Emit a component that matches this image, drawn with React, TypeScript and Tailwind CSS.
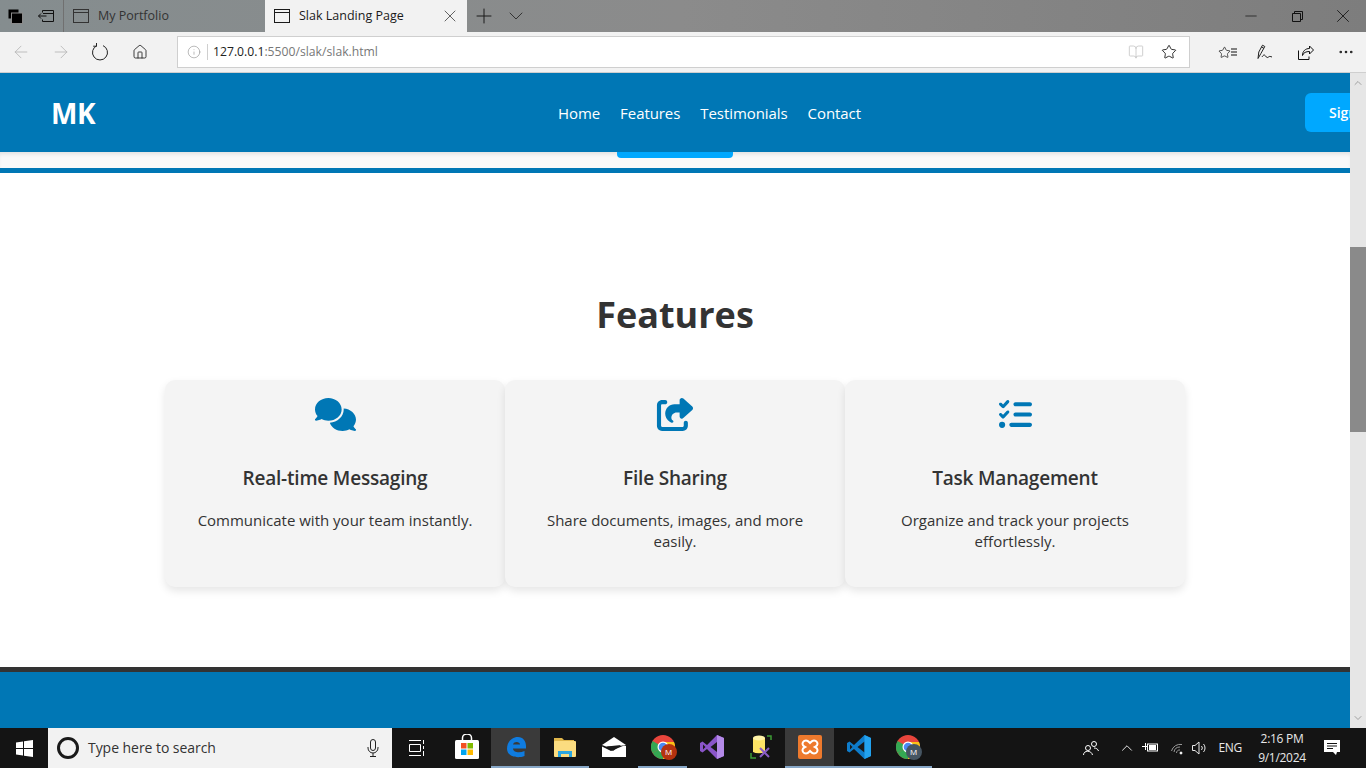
import React from 'react';
import {
  ArrowLeft,
  ArrowRight,
  BookOpen,
  ChevronDown,
  ChevronUp,
  Home,
  Info,
  Minus,
  MoreHorizontal,
  Plus,
  Star,
  X,
} from 'lucide-react';
import { FaComments, FaListCheck, FaShareFromSquare } from 'react-icons/fa6';

const TabIcon = () => (
  <svg width="16" height="14" viewBox="0 0 16 14" fill="none" stroke="currentColor" strokeWidth="1">
    <rect x="0.5" y="0.5" width="15" height="13" />
    <path d="M0.5 3.5h15" />
  </svg>
);

const WindowsLogo = () => (
  <svg width="17" height="17" viewBox="0 0 17 17" fill="#fff">
    <path d="M0 2.4 7 1.4V8H0zM8 1.3 17 0v8H8zM0 9h7v6.6L0 14.600zM8 9h9v8L8 15.700z" />
  </svg>
);

const StoreIcon = () => (
  <svg width="24" height="26" viewBox="0 0 24 26">
    <path d="M7.500 6V4a4.500 4 0 0 1 9 0v2" fill="none" stroke="#fff" strokeWidth="1.500" />
    <rect x="0" y="6" width="24" height="19" rx="1.500" fill="#fff" />
    <rect x="6" y="9" width="5.500" height="5.500" fill="#f25022" />
    <rect x="12.500" y="9" width="5.500" height="5.500" fill="#7fba00" />
    <rect x="6" y="15.500" width="5.500" height="5.500" fill="#00a4ef" />
    <rect x="12.500" y="15.500" width="5.500" height="5.500" fill="#ffb900" />
  </svg>
);

const EdgeIcon = () => (
  <svg width="22" height="22" viewBox="0 0 22 22" fill="none">
    <path
      d="M2 13C2 5 8 .8 13 1c5 .2 8 4 8 9v2.500H8c.3 4 6.500 5 11.500 2.500v5c-6 2.500-17 1.500-17.500-7z"
      fill="#0f7ce0"
    />
    <path d="M8 8.500h7c0-3-6-3.500-7 0z" fill="#3a3a3a" />
  </svg>
);

const FolderIcon = () => (
  <svg width="22" height="20" viewBox="0 0 22 20">
    <path d="M0 1h8l2 2h10v3H0z" fill="#e0b64b" />
    <rect x="0" y="4" width="22" height="16" rx="1" fill="#fbdc80" />
    <path d="M4 20v-6h14v6h-3v-3H7v3z" fill="#2aa6e0" />
  </svg>
);

const MailIcon = () => (
  <svg width="24" height="20" viewBox="0 0 24 20">
    <path d="M12 0 24 8 14 9.500 4 9.500 0 8z" fill="#fff" />
    <path d="M0 9.500 9 14 22 8.500 24 9v11H0z" fill="#fff" />
    <path d="M5 9.500 19 8 11 14z" fill="#1a1a1a" />
  </svg>
);

const ChromeIcon = ({ badge }: { badge: string }) => (
  <div className="relative w-6 h-6">
    <svg width="24" height="24" viewBox="0 0 24 24">
      <circle cx="12" cy="12" r="12" fill="#e8453c" />
      <path d="M12 12 1.600 18A12 12 0 0 0 12 24z" fill="#34a853" />
      <path d="M1.600 6A12 12 0 0 0 1.600 18L12 12z" fill="#34a853" />
      <path d="M12 12 12 24A12 12 0 0 0 23 7H12z" fill="#fbc116" />
      <circle cx="12" cy="12" r="5.500" fill="#fff" />
      <circle cx="12" cy="12" r="4.300" fill="#4a8af4" />
    </svg>
    <div
      className={`absolute left-[10px] top-[9px] w-4 h-4 rounded-full flex items-center justify-center text-[8px] text-white ${
        badge === 'red' ? 'bg-[#b5320f]' : 'bg-[#465562]'
      }`}
    >
      M
    </div>
  </div>
);

const VisualStudioIcon = () => (
  <svg width="24" height="24" viewBox="0 0 24 24">
    <path d="M17 0 24 3v18l-7 3-10-10-4.500 3.500L0 16V8l2.500-1.500L7 10z" fill="#8a55c9" />
    <path d="M17 7 10.500 12l6.500 5z" fill="#1a1a1a" />
    <path d="M3 9.500v5l2.500-2.500z" fill="#1a1a1a" />
    <path d="M17 0 24 3v18l-7 3z" fill="#b48ae8" />
  </svg>
);

const DbToolIcon = () => (
  <svg width="22" height="24" viewBox="0 0 22 24" fill="none">
    <path d="M3 3v14a7 2.500 0 0 0 12 0V3z" fill="#fde365" />
    <ellipse cx="9" cy="3" rx="6" ry="2.500" fill="#fff3a8" />
    <path d="M17 1h4v4M1 18v5h5M17 23" stroke="#3d9b35" strokeWidth="1.500" />
    <path d="M10 22l9-9M10 13l9 9" stroke="#8a5dc4" strokeWidth="2" />
  </svg>
);

const XamppIcon = () => (
  <svg width="24" height="24" viewBox="0 0 24 24" fill="none">
    <rect width="24" height="24" rx="2" fill="#ee7a2d" />
    <path
      d="M8 5.500c2 0 3 1.500 4 2.500 1-1 2-2.500 4-2.500 3 0 3.500 3 3.500 3.500 0 1.500-1.500 2.500-2.500 3 1 .5 2.500 1.500 2.500 3 0 .5-.5 3.500-3.500 3.500-2 0-3-1.500-4-2.500-1 1-2 2.500-4 2.500-3 0-3.500-3-3.500-3.500 0-1.500 1.500-2.500 2.500-3-1-.5-2.500-1.500-2.500-3 0-.5.500-3.500 3.500-3.500z"
      stroke="#fff"
      strokeWidth="2"
    />
  </svg>
);

const VSCodeIcon = () => (
  <svg width="24" height="24" viewBox="0 0 24 24">
    <path d="M17.500 0 24 3v18l-6.500 3L7 14l-4.500 3.500L0 16V8l2.500-1.500L7 10z" fill="#0e7ccb" />
    <path d="M17.500 6.500 10.500 12l7 5.500z" fill="#1a1a1a" />
    <path d="M3 9.500v5l2.500-2.500z" fill="#1a1a1a" />
    <path d="M17.500 0 24 3v18l-6.500 3z" fill="#22a2ef" />
  </svg>
);

const features = [
  { icon: FaComments, title: 'Real-time Messaging', text: 'Communicate with your team instantly.' },
  { icon: FaShareFromSquare, title: 'File Sharing', text: 'Share documents, images, and more easily.' },
  { icon: FaListCheck, title: 'Task Management', text: 'Organize and track your projects effortlessly.' },
];

const taskbarApps = [
  { el: <StoreIcon />, open: false, active: false },
  { el: <EdgeIcon />, open: true, active: true },
  { el: <FolderIcon />, open: true, active: false },
  { el: <MailIcon />, open: false, active: false },
  { el: <ChromeIcon badge="red" />, open: true, active: false },
  { el: <VisualStudioIcon />, open: false, active: false },
  { el: <DbToolIcon />, open: false, active: false },
  { el: <XamppIcon />, open: true, active: true },
  { el: <VSCodeIcon />, open: true, active: false },
  { el: <ChromeIcon badge="gray" />, open: true, active: false },
];

const App = () => {
  return (
    <div className="w-[1366px] h-[768px] overflow-hidden flex flex-col font-['Open_Sans','Noto_Sans',sans-serif]">
      {/* Tab strip */}
      <div className="h-8 shrink-0 flex items-stretch bg-gradient-to-r from-[#858d8f] via-[#8b8b8b] to-[#7d7d7d] text-[#1a1a1a]">
        <div className="w-16 flex items-center pl-2 gap-[15px] border-r border-[#707070]">
          <svg width="15" height="15" viewBox="0 0 15 15" fill="#000">
            <rect x="0.500" y="0.500" width="10" height="9" />
            <rect x="3.500" y="4" width="11" height="10.500" stroke="#8b8b8b" />
          </svg>
          <svg width="16" height="12" viewBox="0 0 16 12" fill="none" stroke="#111">
            <path d="M4.500 2.500V.5h11v11h-11v-2M.5 6h8M3 3.500.5 6 3 8.500M5 3.500h10" />
          </svg>
        </div>
        <div className="w-[201px] flex items-center pl-[9px] gap-2 text-[#333]">
          <TabIcon />
          <span className="text-[12.500px] ml-[1px]">My Portfolio</span>
        </div>
        <div className="w-[202px] flex items-center pl-[9px] bg-[#f2f2f2]">
          <TabIcon />
          <span className="text-[12.500px] ml-[9px] whitespace-nowrap">Slak Landing Page</span>
          <X className="w-[20px] h-[20px] ml-auto mr-[7px] text-[#444]" strokeWidth={1} />
        </div>
        <div className="flex items-center pl-[5px] gap-2">
          <Plus className="w-6 h-6" strokeWidth={1} />
          <ChevronDown className="w-6 h-6 text-[#333]" strokeWidth={1} />
        </div>
        <div className="ml-auto flex items-center">
          <div className="w-[46px] flex justify-center">
            <Minus className="w-[18px] h-[18px]" strokeWidth={1} />
          </div>
          <div className="w-[46px] flex justify-center">
            <svg width="11" height="11" viewBox="0 0 11 11" fill="none" stroke="#111">
              <path d="M.5 2.500h8v8h-8zM2.500 2.500v-2h8v8h-2" />
            </svg>
          </div>
          <div className="w-[46px] flex justify-center">
            <X className="w-[22px] h-[22px]" strokeWidth={1} />
          </div>
        </div>
      </div>

      {/* Address toolbar */}
      <div className="h-[41px] shrink-0 flex items-center bg-[#f2f2f2] border-b border-[#cfcfcf]">
        <div className="w-[177px] flex items-center pl-[11px] gap-[20px]">
          <ArrowLeft className="w-[20px] h-[20px] text-[#b4b4b4]" strokeWidth={1} />
          <ArrowRight className="w-[20px] h-[20px] text-[#b4b4b4]" strokeWidth={1} />
          <svg width="18" height="18" viewBox="0 0 18 18" fill="none" stroke="#222" strokeWidth="1">
            <path d="M6 2.600A7.500 7.500 0 1 0 12 2.600" />
            <path d="M5.500 0v3.200H2.200" />
          </svg>
          <Home className="w-[16px] h-[16px] ml-[3px] text-[#222]" strokeWidth={1.300} />
        </div>
        <div className="w-[1013px] h-[32px] flex items-center bg-white border border-[#cfcfcf]">
          <Info className="w-[14px] h-[14px] ml-[9px] text-[#8a8a8a]" strokeWidth={1} />
          <div className="w-px h-[16px] bg-[#cfcfcf] ml-[6px]" />
          <span className="text-[12.200px] mt-[1px] ml-[5px] text-[#777]">
            <span className="text-[#222]">127.0.0.1</span>:5500/slak/slak.html
          </span>
          <BookOpen className="w-[16px] h-[16px] ml-auto text-[#c4c4c4]" strokeWidth={1.200} />
          <Star className="w-[16px] h-[16px] ml-[17px] mr-[12px] text-[#111]" strokeWidth={1.300} />
        </div>
        <div className="flex items-center ml-[28px]">
          <div className="w-[16px] flex items-center">
            <Star className="w-[13px] h-[13px] shrink-0 text-[#111]" strokeWidth={1.300} />
            <svg className="shrink-0" width="6" height="8" viewBox="0 0 6 8" stroke="#111">
              <path d="M0 1h6M0 4h6M0 7h6" />
            </svg>
          </div>
          <svg className="ml-[23px]" width="16" height="16" viewBox="0 0 16 16" fill="none" stroke="#222">
            <path d="M1 14.500 1.800 8 5.500 1.200 7.800 2.500 4 9.300zM4.500 3l2.300 1.300" />
            <path d="M5 13c1.500-2.500 2.500-2.500 3.500-1s2 2 3 1 2-.5 3.500 0" />
          </svg>
          <svg className="ml-[25px]" width="16" height="15" viewBox="0 0 16 15" fill="none" stroke="#111">
            <path d="M11.500 1 15.500 5l-4 4V6.500C8 6.500 5.500 7.500 4.500 10.500 4.500 6 7.500 3.500 11.500 3.500z" />
            <path d="M.5 5.500v9h10.500v-3" />
          </svg>
          <MoreHorizontal className="w-[18px] h-[18px] ml-[23px] text-[#222]" strokeWidth={1.500} />
        </div>
      </div>

      {/* Page viewport */}
      <div className="flex-1 min-h-0 flex">
        <div className="w-[1350px] overflow-hidden flex flex-col">
          <header className="h-[79px] shrink-0 flex items-center bg-[#0077b5] text-white pl-[51px]">
            <div className="w-[507px] shrink-0 text-[28px] leading-none font-bold tracking-[-0.3px]">MK</div>
            <nav className="w-[303px] shrink-0 mt-[1px] flex justify-between text-[15px] whitespace-nowrap tracking-[-0.07px]">
              <span>Home</span>
              <span>Features</span>
              <span>Testimonials</span>
              <span>Contact</span>
            </nav>
            <button className="ml-[444px] h-[39px] shrink-0 rounded-md bg-[#00a8ff] px-6 text-sm font-semibold whitespace-nowrap">
              Sign Up
            </button>
          </header>

          {/* Bottom of hero, scrolled under the header */}
          <div className="h-4 shrink-0 flex justify-center items-start bg-[#f9f9f9] shadow-[inset_0_4px_4px_-2px_rgba(0,0,0,0.1)]">
            <div className="w-[116px] h-[6px] rounded-b bg-[#00a8ff]" />
          </div>

          <section className="h-[499px] shrink-0 border-t-[5px] border-[#0077b5] bg-white pt-[116px]">
            <h2 className="text-[36px] leading-[52px] font-bold text-center text-[#333]">Features</h2>
            <div className="mt-[39px] flex justify-center">
              {features.map((feature) => (
                <div
                  key={feature.title}
                  className="w-[340px] h-[207px] rounded-[10px] bg-[#f4f4f4] shadow-[0_4px_8px_rgba(0,0,0,0.1)] px-5 pt-[18px] text-center"
                >
                  <feature.icon className="w-[41px] h-[33px] mx-auto text-[#0077b5]" />
                  <h3 className="mt-[35px] text-[19px] leading-[24px] font-semibold text-[#333] tracking-[-0.2px]">
                    {feature.title}
                  </h3>
                  <p className="mt-[20px] text-[15px] leading-[21px] text-[#333]">{feature.text}</p>
                </div>
              ))}
            </div>
          </section>

          <footer className="flex-1 border-t-[5px] border-[#333] bg-[#0077b5]" />
        </div>

        {/* Scrollbar */}
        <div className="w-4 shrink-0 flex flex-col items-center bg-[#e6e6e6] text-[#8a8a8a]">
          <ChevronUp className="w-3 h-3 mt-1 mb-[158px]" strokeWidth={1.500} />
          <div className="w-4 h-[185px] bg-[#8a8a8a]" />
          <ChevronDown className="w-3 h-3 mt-auto mb-1" strokeWidth={1.500} />
        </div>
      </div>

      {/* Windows taskbar */}
      <div className="h-10 shrink-0 flex items-stretch bg-[#141414] text-white">
        <div className="w-12 flex items-center justify-center">
          <WindowsLogo />
        </div>
        <div className="w-[344px] flex items-center bg-[#f2f2f2] pl-[9px] text-[#333]">
          <div className="w-[22px] h-[22px] rounded-full border-[3px] border-[#1a1a1a]" />
          <span className="ml-[9px] text-sm tracking-[-0.05px]">Type here to search</span>
          <svg className="ml-auto mr-[13px]" width="12" height="18" viewBox="0 0 12 18" fill="none" stroke="#222">
            <rect x="3.500" y="0.500" width="5" height="11" rx="2.500" />
            <path d="M1 8v1a5 5 0 0 0 10 0V8M6 14v3M3 17.500h6" />
          </svg>
        </div>
        <div className="w-[50px] flex items-center justify-center">
          <svg width="16" height="16" viewBox="0 0 16 16" fill="none" stroke="#fff">
            <path d="M0 .5h12M0 15.500h12M.5 4.500h11v7H.5zM14.500 0v4M14.500 6v3M14.500 11v5" />
          </svg>
        </div>
        {taskbarApps.map((app, i) => (
          <div
            key={i}
            className={`w-[49px] flex items-center justify-center border-b-2 ${app.active ? 'bg-[#3a3a3a]' : ''} ${
              app.open ? 'border-[#87a7c7]' : 'border-transparent'
            }`}
          >
            {app.el}
          </div>
        ))}
        <div className="ml-auto flex items-center text-[#e8e8e8]">
          <svg width="16" height="16" viewBox="0 0 16 16" fill="none" stroke="#fff">
            <circle cx="11" cy="4" r="2.500" />
            <circle cx="5" cy="8" r="2.500" />
            <path d="M.5 15c0-5 8-5 9 0M11 8c2 0 4 1 4.500 3" />
          </svg>
          <ChevronUp className="w-[18px] h-[18px] ml-[19px]" strokeWidth={1.300} />
          <svg className="ml-[6px]" width="16" height="10" viewBox="0 0 16 10" fill="#fff">
            <path d="M0 3h3V0h1v3h1v1H4v3H3V4H0z" />
            <rect x="5.500" y="1" width="10" height="7" fill="none" stroke="#fff" />
            <rect x="7" y="2" width="7" height="5" />
          </svg>
          <svg className="ml-[13px]" width="15" height="13" viewBox="0 0 15 13" fill="none" stroke="#9a9a9a">
            <path d="M.5 9A9 9 0 0 1 11 2.500M3 10a6 6 0 0 1 6-5M5.500 11A3 3 0 0 1 9 8" />
            <circle cx="10" cy="11" r="1" fill="#fff" stroke="#fff" />
          </svg>
          <svg className="ml-[6px]" width="15" height="14" viewBox="0 0 15 14" fill="none" stroke="#e8e8e8">
            <path d="M.5 4.500h2.500L7 1v12L3 9.500H.5zM9.500 5a3 3 0 0 1 0 4M11.500 3a6 6 0 0 1 0 8" />
          </svg>
          <span className="ml-[11px] text-xs tracking-[-0.3px]">ENG</span>
          <div className="ml-[12px] w-[56px] text-xs leading-[19px] text-center tracking-[-0.3px]">
            <div>2:16 PM</div>
            <div>9/1/2024</div>
          </div>
          <div className="w-[56px] pl-[14px] flex justify-start">
            <svg width="16" height="16" viewBox="0 0 16 16" fill="#fff">
              <path d="M0 0h16v12h-3l-1 3-3-3H0z" />
              <path d="M3 3.500h10M3 6h10M3 8.500h6" stroke="#141414" />
            </svg>
          </div>
        </div>
      </div>
    </div>
  );
};

export default App;
